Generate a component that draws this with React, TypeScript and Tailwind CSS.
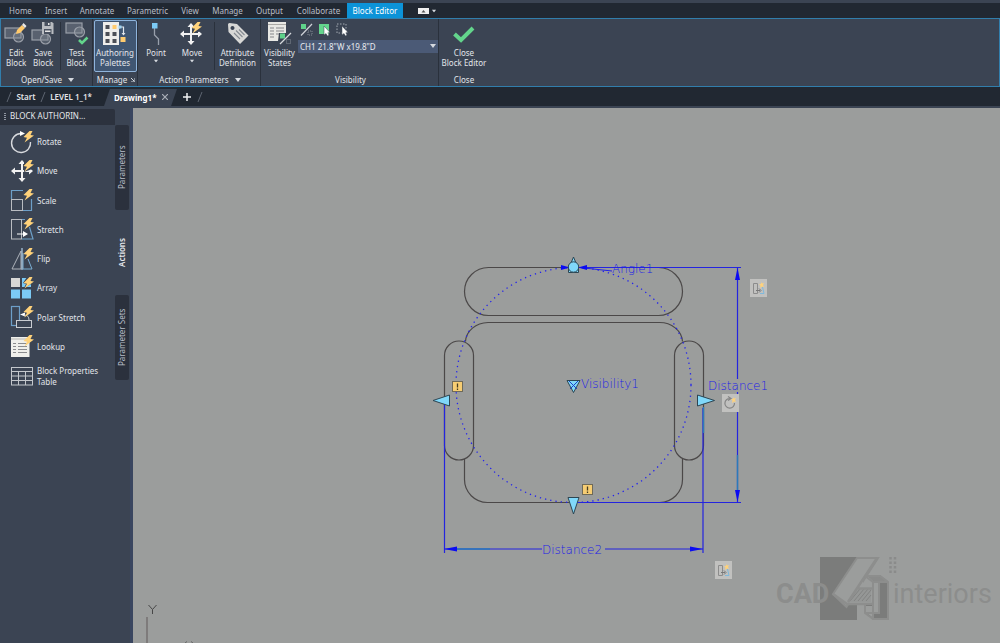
import type { ReactNode } from "react";

const BOLT = "M18.500 0 L12.500 6 L16 6.800 L13.500 11.500 L23 4.500 L19.500 4 L21.500 0 Z";

function Bolt({ d = BOLT }: { d?: string }) {
  return <path d={d} fill="#ffd27a" />;
}

function Icon({ children, className = "h-6 w-6" }: { children: ReactNode; className?: string }) {
  return (
    <svg viewBox="0 0 24 24" className={`${className} shrink-0`} fill="none" aria-hidden="true">
      {children}
    </svg>
  );
}

function Shapes({ y = 8 }: { y?: number }) {
  return (
    <g stroke="#9a9fa8" strokeWidth="1.2">
      <rect x="1" y={y} width="16" height="10" fill="#59616f" />
      <circle cx="14.5" cy={y + 9} r="5" fill="#858b95" fillOpacity=".35" />
    </g>
  );
}

const editIcon = (
  <Icon>
    <Shapes y={7} />
    <path d="M12 13 L13 9 L18 4 L21 7 L16 12 Z" fill="#ffc96b" />
    <path d="M18 4 L19.5 2 L22.5 5 L21 7Z" fill="#e9e9e9" />
  </Icon>
);
const saveIcon = (
  <Icon>
    <Shapes y={9} />
    <path d="M11 1 H21 L22.5 2.5 V13 H11 Z" fill="#b9bcc1" />
    <path d="M13.5 1 H19.5 V5 H13.5Z M13 8 H20.5 V13 H13Z" fill="#4a5260" />
    <path d="M17 2 H18.5 V4 H17Z M14 9.5 H19.5 V11 H14Z" fill="#e5e5e5" />
  </Icon>
);
const testIcon = (
  <Icon>
    <Shapes y={2} />
    <path d="M14 19 L17 22 L22.5 16.5" stroke="#63d58c" strokeWidth="2.6" />
  </Icon>
);
const authoringIcon = (
  <Icon>
    <rect x="0" y="1" width="16" height="23" fill="#eeeeec" />
    <path d="M2.5 4h4v4h-4z M2.5 11h4v4h-4z M9.5 11h4v4h-4z M2.5 18h4v4h-4z M9.5 18h4v4h-4z" fill="#4b4f57" />
    <path d="M9.5 4h4v4h-4z M17.5 16h5v5h-5z" fill="#ffcb6e" />
    <path d="M15 9 L16.500 6 H20.500 V13.500" stroke="#e3e7ec" strokeWidth="1.2" />
    <path d="M18.500 12h4L20.500 14.500Z" fill="#e3e7ec" />
    <path d="M15.500 4.500h3v3h-3z" fill="#9fd4f3" />
  </Icon>
);
const pointIcon = (
  <Icon>
    <path d="M10.500 7 V14 L14.500 18 V24" stroke="#98a0ac" strokeWidth="1.3" />
    <rect x="8" y="2" width="5.500" height="5.500" fill="#7ccaf5" />
  </Icon>
);
const crossPath =
  "M11 2 L14.500 6 H12 V12 H18 V9.500 L22 13 L18 16.500 V14 H12 V20 H14.500 L11 24 L7.500 20 H10 V14 H4 V16.500 L0 13 L4 9.500 V12 H10 V6 H7.500 Z";
const moveIcon = (
  <Icon>
    <path d={crossPath} fill="#f2f2f2" />
    <path d="M13 0H24V9L15 12Z" fill="#3b4453" />
    <g transform="translate(-1 1)">
      <Bolt />
    </g>
  </Icon>
);
const tagIcon = (
  <Icon>
    <path
      fillRule="evenodd"
      d="M2 3.500 Q2 2 3.500 2 L11 3 L22.500 14.500 L14 23 L2.500 11 Z M6.500 5 a2 2 0 1 0 .01 0Z"
      fill="#d8d8d6"
    />
    <path d="M10 9.500 L16.500 16 M8 12 L14 18 M13 8.500 L18.500 14" stroke="#868b92" strokeWidth="1.1" />
  </Icon>
);
const statesIcon = (
  <Icon>
    <rect x="0" y="1" width="18" height="19" fill="#e8e8e4" />
    <path d="M0 3.500H18" stroke="#aaa9a5" />
    <path d="M2 7h4M2 10h4M2 13h4M2 16h4M8 7h8M8 10h8M8 13h4" stroke="#85868a" strokeWidth="1" />
    <path d="M11 12H24V24H10V20Z" fill="#3b4453" />
    <rect x="12" y="12.500" width="5" height="5" fill="#5fd38a" />
    <path d="M12 23 L23 12" stroke="#d6d9dd" strokeWidth="1.2" />
    <rect x="18.500" y="18.500" width="4" height="4" stroke="#858b95" strokeDasharray="1 1" />
  </Icon>
);
const checkIcon = (
  <Icon>
    <path d="M2.500 13 L9 19 L21 7" stroke="#63d58c" strokeWidth="4" />
  </Icon>
);

function Caret({ className = "" }: { className?: string }) {
  return (
    <svg viewBox="0 0 6 4" className={`h-1 w-1.5 ${className}`} aria-hidden="true">
      <path d="M0 0H6L3 4Z" fill="#d5d9df" />
    </svg>
  );
}

function Tool({ icon, lines, width, drop, active }: { icon: ReactNode; lines: string[]; width: string; drop?: boolean; active?: boolean }) {
  return (
    <button
      className={`flex h-[52px] shrink-0 flex-col items-center whitespace-nowrap pt-px leading-[10px] ${width} ${
        active ? "rounded-xs bg-[#405672] outline outline-1 -outline-offset-1 outline-[#8fb4dc]" : ""
      }`}
    >
      {icon}
      <span className="mt-[3px] flex flex-col items-center">
        {lines.map((l) => (
          <span key={l}>{l}</span>
        ))}
      </span>
      {drop && <Caret className="mt-px scale-75" />}
    </button>
  );
}

function Panel({ title, width, children, mark }: { title: string; width: string; children: ReactNode; mark?: ReactNode }) {
  return (
    <section className={`flex shrink-0 flex-col border-r border-[#2a313c] ${width}`}>
      <div className="flex h-[54px] items-start justify-center pt-px">{children}</div>
      <h2 className="flex h-[13px] items-center justify-center gap-1.5 whitespace-nowrap pl-0.5">
        {title}
        {mark}
      </h2>
    </section>
  );
}

const Divider = () => <div className="mt-0.5 h-12 w-px shrink-0 bg-[#2a313c]" />;

const menus: [string, string][] = [
  ["Home", "w-[41px]"],
  ["Insert", "w-[30px]"],
  ["Annotate", "w-[52px]"],
  ["Parametric", "w-[49px]"],
  ["View", "w-[36px]"],
  ["Manage", "w-[39px]"],
  ["Output", "w-[45px]"],
  ["Collaborate", "w-[53px]"],
];

function Cursor() {
  return <path d="M6 3 L6 12 L8 10.500 L9.500 13 L11 12 L9.800 9.800 L12 9.500Z" fill="#fff" stroke="#3b4453" strokeWidth=".5" />;
}

function Ribbon() {
  return (
    <div className="flex h-[69px] border border-[#317eac] bg-[#3b4453]">
      <Panel title="Open/Save" width="w-[92px]" mark={<Caret />}>
        <div className="w-0.5" />
        <Tool icon={editIcon} lines={["Edit", "Block"]} width="w-[27px]" />
        <Tool icon={saveIcon} lines={["Save", "Block"]} width="w-[27px]" />
        <div className="w-1" />
        <Divider />
        <Tool icon={testIcon} lines={["Test", "Block"]} width="w-[31px]" />
      </Panel>
      <Panel
        title="Manage"
        width="w-[45px]"
        mark={
          <svg viewBox="0 0 4 4" className="-ml-0.5 h-1 w-1" aria-hidden="true">
            <path d="M0 0L3 3M4 0V4H0" stroke="#d5d9df" fill="none" />
          </svg>
        }
      >
        <Tool active icon={authoringIcon} lines={["Authoring", "Palettes"]} width="w-[43px]" />
      </Panel>
      <Panel title="Action Parameters" width="w-[123px]" mark={<Caret />}>
        <Tool icon={pointIcon} lines={["Point"]} width="w-[36px]" drop />
        <Tool icon={moveIcon} lines={["Move"]} width="w-[36px]" drop />
        <div className="w-1" />
        <Divider />
        <Tool icon={tagIcon} lines={["Attribute", "Definition"]} width="w-[45px]" />
      </Panel>
      <Panel title="Visibility" width="w-[178px]">
        <Tool icon={statesIcon} lines={["Visibility", "States"]} width="w-[37px]" />
        <div className="flex min-w-0 flex-1 flex-col">
          <div className="flex h-5 items-start gap-1 pl-0.5 pt-[3px]">
            <button aria-label="Visibility mode">
              <svg viewBox="0 0 14 14" className="h-3.5 w-3.5" fill="none">
                <rect x="1" y="1" width="5" height="5" fill="#5fd38a" />
                <path d="M1 12.500 L12 1" stroke="#d0d3d8" strokeWidth="1.200" />
                <rect x="8" y="8" width="4" height="4" stroke="#858b95" strokeDasharray="1 1" />
              </svg>
            </button>
            <button aria-label="Make visible">
              <svg viewBox="0 0 14 14" className="h-3.5 w-3.5" fill="none">
                <rect x="1" y="1" width="10" height="10" fill="#63d58c" />
                <Cursor />
              </svg>
            </button>
            <button aria-label="Make invisible">
              <svg viewBox="0 0 14 14" className="h-3.5 w-3.5" fill="none">
                <rect x="1" y="1" width="9" height="9" stroke="#a3a9b2" strokeDasharray="1.500 1.500" />
                <Cursor />
              </svg>
            </button>
          </div>
          <div className="relative flex h-[13px]">
            <select aria-label="Visibility state" className="w-full appearance-none bg-[#4b5a76] pl-0.5 text-[8px] leading-[13px] text-[#e8ebf0] outline-none">
              <option>CH1 21.8"W x19.8"D</option>
            </select>
            <Caret className="pointer-events-none absolute right-0.5 top-1" />
          </div>
        </div>
      </Panel>
      <section className="flex w-[50px] shrink-0 flex-col">
        <div className="flex h-[54px] items-start justify-center pt-px">
          <Tool icon={checkIcon} lines={["Close", "Block Editor"]} width="w-[50px]" />
        </div>
        <h2 className="flex h-[13px] items-center justify-center">Close</h2>
      </section>
    </div>
  );
}

function Slash() {
  return (
    <svg viewBox="0 0 6 12" className="h-3 w-1.5 shrink-0" aria-hidden="true">
      <path d="M1 11 L5 1" stroke="#5d6571" />
    </svg>
  );
}

function FileTabs() {
  return (
    <nav className="flex h-[19px] items-center bg-[#212832] text-[8px] font-semibold text-[#e2e4e8]">
      <div className="w-1.5" />
      <Slash />
      <button className="w-7">Start</button>
      <Slash />
      <button className="w-[50px]">LEVEL 1_1*</button>
      <div className="relative ml-2 flex h-full w-[73px] items-start">
        <svg viewBox="0 0 74 17" preserveAspectRatio="none" className="absolute bottom-0 h-[17px] w-full" aria-hidden="true">
          <path d="M0 17 L6 0 H74 L68 17Z" fill="#3b4453" />
        </svg>
        <button className="relative flex h-5 items-center pl-2.5 font-bold text-white">Drawing1*</button>
        <button aria-label="Close tab" className="relative ml-1.5 flex h-5 items-center">
          <svg viewBox="0 0 6 6" className="h-1.5 w-1.5">
            <path d="M0 0L6 6M6 0L0 6" stroke="#aab0b9" strokeWidth="1.200" />
          </svg>
        </button>
      </div>
      <button aria-label="New tab" className="mx-1.5 flex">
        <svg viewBox="0 0 8 8" className="h-2 w-2">
          <path d="M4 0V8M0 4H8" stroke="#f0f1f3" strokeWidth="1.500" />
        </svg>
      </button>
      <Slash />
    </nav>
  );
}

const actions: [string, ReactNode][] = [
  ["Rotate", <g key="r"><path d="M10 2.500 A9.500 9.500 0 1 0 19.500 11" stroke="#d8dade" strokeWidth="1.400" /><path d="M9 0L14 2.500L9 5Z" fill="#fff" /><Bolt /></g>],
  ["Move", <g key="m"><path d={crossPath} fill="#f2f2f2" transform="translate(0,-2)" /><path d="M13 0H24V8L13 12Z" fill="#3b4453" /><Bolt /></g>],
  ["Scale", <g key="s"><path d="M.500 10V1.500H12M20.500 10V21.500H11" stroke="#6d9fc8" strokeWidth="1.200" /><rect x=".500" y="10.500" width="11" height="11" stroke="#b9bcc1" /><Bolt /></g>],
  ["Stretch", <g key="st"><rect x=".500" y="1.500" width="10" height="19.500" stroke="#b9bcc1" /><path d="M11 1.500H14M18.500 9L22 21H11" stroke="#6d9fc8" strokeWidth="1.200" /><path d="M6 15.500H12V13L17 16L12 19V16.500H6Z" fill="#fff" /><Bolt /></g>],
  ["Flip", <g key="f"><path d="M10 3L1 21H10Z" stroke="#aeb3bb" /><path d="M12 5V21H21L17 11" stroke="#7aaed3" /><path d="M11 0V22" stroke="#a9c5dc" strokeWidth="1.300" /><Bolt /></g>],
  ["Array", <g key="a"><rect x="0" y="1" width="9" height="9" fill="#d8d8d6" /><path d="M11 1h9v9h-9zM0 12.500h9v9H0zM11 12.500h9v9h-9z" fill="#7ccaf5" /><path d="M16 0L12 6L15 7L13 11L22 6V0Z" fill="#3b4453" /><Bolt /></g>],
  ["Polar Stretch", <g key="p"><rect x=".500" y=".500" width="8" height="19" stroke="#6d9fc8" strokeWidth="1.200" /><rect x="5.500" y="14.500" width="15" height="7" fill="#3b4453" stroke="#c9ccd1" /><path d="M9 8.500L14 6.500V10.500Z" fill="#fff" /><path d="M13 9Q18 9 18 14" stroke="#c9ccd1" /><Bolt /></g>],
  ["Lookup", <g key="l"><rect x="0" y="2" width="18.500" height="20" fill="#efefeb" /><path d="M0 4H18" stroke="#b7b6b1" /><path d="M2 8.500h3M2 11.500h3M2 14.500h3M2 17.500h3M7 8.500h9M7 11.500h9M7 14.500h9M7 17.500h9" stroke="#8a8b8e" /><Bolt /></g>],
  ["Block Properties Table", <g key="b" stroke="#c3c7cc"><rect x=".500" y="2.500" width="21" height="17.500" /><path d="M0 6.500H22M0 11H22M0 15.500H22M7.500 6.500V20M14.500 6.500V20" /></g>],
];

const sideTabs: [string, string][] = [
  ["Parameters", "bg-[#2b313d] text-[#b8bec8]"],
  ["Actions", "font-semibold text-[#e6e8ec]"],
  ["Parameter Sets", "bg-[#2b313d] text-[#b8bec8]"],
];

function Palette() {
  return (
    <aside className="flex w-[133px] shrink-0 flex-col border-r-3 border-[#3a4660] bg-[#3b4453] pt-px">
      <h1 className="flex h-4 w-[115px] items-start gap-1 rounded-t-xs bg-[#2c323e] pl-1 pt-px text-[8px] text-[#e6e8ec]">
        <svg viewBox="0 0 2 7" className="mt-[3px] h-[7px] w-0.5" aria-hidden="true">
          <path d="M1 0V7" stroke="#9198a3" strokeWidth="2" strokeDasharray="1 1" />
        </svg>
        BLOCK AUTHORIN...
      </h1>
      <div className="flex items-start">
        <ul className="flex h-[265px] w-[115px] flex-col justify-between pt-0.5">
          {actions.map(([label, art]) => (
            <li key={label}>
              <button className="flex h-[29px] w-full items-center gap-1 pl-[11px] text-left text-[8px] leading-[11px] text-[#e2e5ea]">
                <svg viewBox="0 0 22 22" className="h-[22px] w-[22px] shrink-0 overflow-visible" fill="none" aria-hidden="true">
                  {art}
                </svg>
                <span className="w-16">{label}</span>
              </button>
            </li>
          ))}
        </ul>
        <div className="flex w-3.5 flex-col" role="tablist">
          {sideTabs.map(([label, style]) => (
            <button
              key={label}
              role="tab"
              aria-selected={label === "Actions"}
              className={`flex h-[85px] w-3.5 rotate-180 items-center justify-center rounded-xs text-[8px] leading-[14px] [writing-mode:vertical-rl] ${style}`}
            >
              {label}
            </button>
          ))}
        </div>
      </div>
    </aside>
  );
}

function ActionBadge({ x, y, rotate }: { x: number; y: number; rotate?: boolean }) {
  return (
    <g transform={`translate(${x} ${y})`} fill="none">
      <rect width="17" height="18" fill="#c1c1bf" />
      {rotate ? (
        <path d="M8 4.500A4.800 4.800 0 1 0 12.500 9M6 2.500L9 4.500L6 6.500" stroke="#858585" strokeWidth="1.200" />
      ) : (
        <g>
          <path d="M3.500 4.500H7.500V14.500H3.500Z" stroke="#8c8c8c" />
          <path d="M6 11.500H10M9 9.500L11 11.500L9 13.500" stroke="#777" />
          <path d="M10 14.500H14L12.500 8" stroke="#7fb8db" />
        </g>
      )}
      <path d="M11 3L12 4.500L14 4L13 6L14 8L12 7.500L10 9L10.500 6.500L9 5L11 5Z" fill="#ffd27a" />
    </g>
  );
}

function Alert({ x, y }: { x: number; y: number }) {
  return (
    <g transform={`translate(${x} ${y})`}>
      <rect x=".500" y=".500" width="10" height="10" fill="#f6cd73" stroke="#6f6a58" />
      <path d="M5.500 2.500V6.500M5.500 7.500V9" stroke="#453c22" strokeWidth="1.300" />
    </g>
  );
}

function Drawing() {
  return (
    <svg viewBox="133 108 867 535" className="h-full w-full" fill="none" role="img" aria-label="Chair block">
      <g stroke="#4b4848" strokeWidth="1.200">
        <rect x="464.500" y="267.500" width="218" height="48" rx="24" />
        <path d="M465.500 341.500A23 20 0 0 1 488 322.500H659A23 20 0 0 1 682.500 341.500" />
        <path d="M464.500 459V479A23 23 0 0 0 488 502.500H659A23 23 0 0 0 682.500 479V459" />
        <rect x="444.500" y="341" width="29" height="119" rx="14.500" />
        <rect x="674.500" y="341" width="29" height="119" rx="14.500" />
      </g>
      <circle cx="573.500" cy="385" r="117.500" stroke="#2222ee" strokeWidth="1.300" strokeDasharray="1.300 4" />
      <g stroke="#2424df" strokeWidth="1.200">
        <path d="M584 267.500H741M573 502.500H741M444.500 403V553M703 408V553" />
        <path d="M737.500 268V379M737.500 392V502" />
        <path d="M445 549H542M605 549H703M584 268L612 271" />
      </g>
      <path d="M703.500 407V433M737.500 455V490M457 549H490" stroke="#2b7aba" strokeWidth="1.400" />
      <path
        d="M737.500 268L735 280H740ZM737.500 502L735 490H740ZM444 549L457 546.500V551.500ZM703 549L690 546.500V551.500ZM570 267.500L561 265V270ZM578 267.500L587 265V270Z"
        fill="#0b0bf2"
      />
      <g fontFamily="'DejaVu Sans Light','DejaVu Sans ExtraLight','DejaVu Sans',sans-serif" fontWeight="200" fontSize="12" fill="#1c1ce6">
        <text x="612" y="273">Angle1</text>
        <text x="581" y="388">Visibility1</text>
        <text x="708" y="390">Distance1</text>
        <text x="542" y="554">Distance2</text>
      </g>
      <g fill="#80d8fa" stroke="#2d4653">
        <path d="M568.500 268H578.500V272.500H568.500ZM573.500 257L576 263H571Z" />
        <circle cx="573.500" cy="267" r="5.200" />
        <path d="M433 400.500L449.500 395V406Z" />
        <path d="M714.500 400.500L697.500 395V406Z" />
        <path d="M573.500 514L568 497.500H579Z" />
        <path d="M573.500 392.500L567 380.500H580Z" />
      </g>
      <path d="M569 381L577 389M578 381L570 389" stroke="#1c3fc9" />
      <Alert x={452} y={381} />
      <Alert x={582} y={484} />
      <ActionBadge x={750} y={279} />
      <ActionBadge x={722} y={394} rotate />
      <ActionBadge x={715} y={561} />
      <path d="M148.500 605L152.500 609.500L156.500 605M152.500 609.500V614" stroke="#474747" />
      <path d="M147 617V643" stroke="#747171" strokeWidth="1.500" />
      <path d="M185 643L187 641.500M191 641.500L193 643" stroke="#666" />
    </svg>
  );
}

function Watermark() {
  return (
    <svg viewBox="775 553 220 72" className="absolute bottom-[18px] right-[5px] h-[72px] w-[220px]" fill="none" role="img" aria-label="CAD 4 interiors">
      <rect x="820" y="557" width="37" height="63" fill="#7b7c7b" />
      <path d="M857 558H878L846.500 607L833 594Z" fill="#9b9d9c" stroke="#8d8e8d" strokeWidth="2" />
      <path d="M847 603L863 577V588H872V603Z" fill="#9b9d9c" />
      <path d="M848 602L858 589H871V602Z" fill="#959796" />
      <path d="M850 601L860 589M854 601L864 589M858 601L868 589M862 601L871 590M866 601L871 595" stroke="#828382" />
      <path d="M877 558L848 602M833 594L847 604H872M858 588.500H872" stroke="#8d8e8d" strokeWidth="2.500" />
      <path d="M866 575H880L888 581H873Z" fill="#8a8b8a" />
      <path d="M879 582H888V619H873L865 613V605H873V582Z" fill="#7b7c7b" />
      <path d="M873 583H879V613H873Z" fill="#9b9d9c" />
      <path d="M865 606L872 606V617L865 612Z" fill="#9b9d9c" />
      <path d="M865 576H880L888 582V619H873V582H888M865 576L873 582M865 604V613L873 619M879 583V613H866" stroke="#8d8e8d" strokeWidth="2" />
      <path d="M890.500 557V575M895 557V575" stroke="#8a8b8a" strokeWidth="2.500" strokeDasharray="2.500 2" />
      <g fontFamily="Roboto,'Liberation Sans',sans-serif" fill="#8c8d8c">
        <text x="776" y="603" fontSize="27" fontWeight="700">CAD</text>
        <text x="893" y="603" fontSize="27" fontWeight="400">interiors</text>
      </g>
    </svg>
  );
}

export default function App() {
  return (
    <div className="flex h-screen flex-col overflow-hidden bg-[#3b4453] font-['Noto_Sans','Open_Sans',sans-serif] text-[8px] leading-[11px] text-[#e2e5ea]">
      <header className="border-t-3 border-[#3b4453]">
        <nav className="flex h-[15px] items-center bg-[#212832] text-[#b9bec7]">
          {menus.map(([m, w]) => (
            <button key={m} className={`shrink-0 text-center ${w}`}>
              {m}
            </button>
          ))}
          <button className="ml-0.5 flex w-14 shrink-0 items-center justify-center self-stretch bg-[#0c93d8] text-white">Block Editor</button>
          <button aria-label="Ribbon display" className="ml-[15px] flex items-center gap-0.5">
            <svg viewBox="0 0 11 6" className="h-1.5 w-[11px]">
              <path d="M0 0H11V6H0Z" fill="#f0f0f0" />
              <path d="M3.500 4.500L5.500 2L7.500 4.500Z" fill="#555" />
            </svg>
            <Caret className="scale-75" />
          </button>
        </nav>
        <Ribbon />
        <FileTabs />
      </header>
      <div className="flex min-h-0 flex-1 pt-0.5">
        <Palette />
        <main className="relative min-w-0 flex-1 bg-[#9b9d9c]">
          <Drawing />
          <Watermark />
        </main>
      </div>
    </div>
  );
}
